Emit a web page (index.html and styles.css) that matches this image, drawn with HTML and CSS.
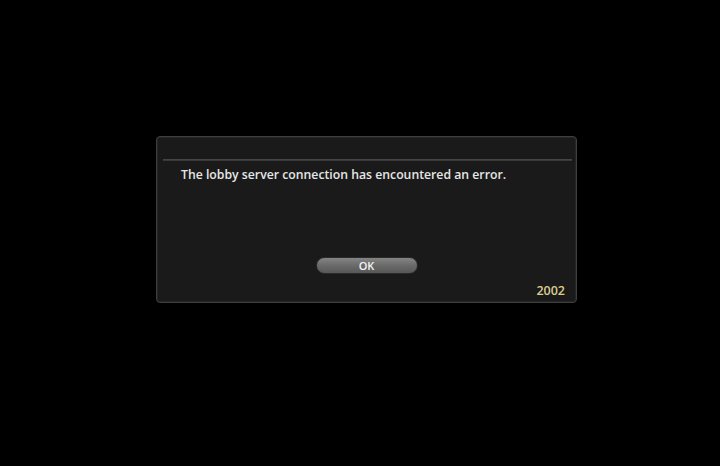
FILE: index.html
```html
<!DOCTYPE html>
<html>
<head>
<meta charset="utf-8">
<link rel="stylesheet" href="styles.css">
<title>Error</title>
</head>
<body>
<div class="screen">
  <div class="dialog">
    <div class="titlebar"></div>
    <div class="rule"></div>
    <p class="message">The lobby server connection has encountered an error.</p>
    <div class="actions">
      <button class="btn">OK</button>
    </div>
    <div class="code">2002</div>
  </div>
</div>
</body>
</html>
```
FILE: styles.css
```css
html, body {
  margin: 0;
  padding: 0;
  background: #000;
}

.screen {
  width: 720px;
  height: 466px;
  box-sizing: border-box;
  padding: 136px 0 0 156px;
  background: #000;
}

.dialog {
  width: 421px;
  height: 167px;
  box-sizing: border-box;
  border: 1px solid #3e3e3e;
  border-radius: 4px;
  background: #1a1a1a;
  box-shadow: inset 0 0 0 1px #252525;
  display: flex;
  flex-direction: column;
  font-family: "Open Sans", "DejaVu Sans", sans-serif;
}

.titlebar {
  height: 22px;
}

.rule {
  height: 2px;
  margin: 0 4px 0 6px;
  background: linear-gradient(#4a4a4a, #343434);
}

.message {
  margin: 6px 0 0 24px;
  font-size: 12.25px;
  font-weight: 600;
  line-height: 16px;
  color: #e6e6e6;
}

.actions {
  display: flex;
  justify-content: center;
  margin-top: 74px;
}

.btn {
  width: 102px;
  height: 17px;
  padding: 0;
  border: 1px solid #2a2a2a;
  border-radius: 9px;
  background: linear-gradient(#858585, #6a6a6a 50%, #575757);
  color: #f4f4f4;
  font-family: "Open Sans", "DejaVu Sans", sans-serif;
  font-size: 11px;
  font-weight: 600;
  line-height: 15px;
}

.code {
  align-self: flex-end;
  margin: 10px 11px 0 0;
  font-size: 12.5px;
  font-weight: 600;
  line-height: 14px;
  color: #dccd90;
}
```
